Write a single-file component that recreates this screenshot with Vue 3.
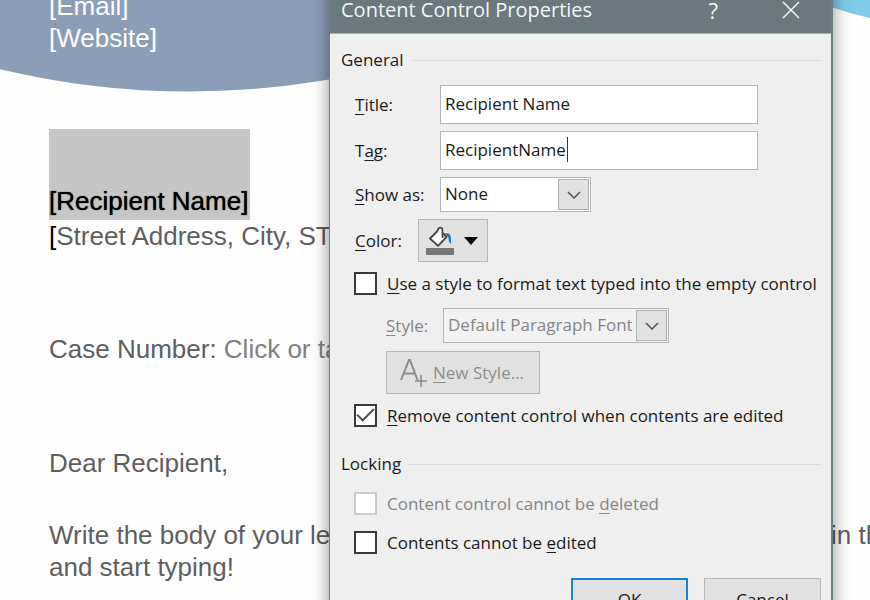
<script setup>
import { ref } from 'vue'

const title = ref('Recipient Name')
const tag = ref('RecipientName')
const showAs = ref('None')
const paragraphStyle = ref('Default Paragraph Font')
const useStyle = ref(false)
const removeOnEdit = ref(true)
const lockDelete = ref(false)
const lockEdit = ref(false)
</script>

<template>
  <main class="workspace">
    <article class="letter">
      <svg class="banner" viewBox="0 0 870 100" preserveAspectRatio="none" aria-hidden="true">
        <path d="M0 0H500V30.600A820 820 0 0 1 0 69.200Z" fill="#8b9eb7" />
        <path d="M780 0H870V18Q850 13.500 832 7.500L780 -12Z" fill="#7fcbea" />
      </svg>
      <address class="contact">
        <span>[Email]</span>
        <span>[Website]</span>
      </address>
      <p class="recipient"><mark>[Recipient Name]</mark></p>
      <p class="street"><b>[</b>Street Address, City, ST</p>
      <p class="case">Case Number: <span>Click or ta</span></p>
      <p class="greeting">Dear Recipient,</p>
      <div class="body-text">
        <p class="split"><span>Write the body of your le</span><span>in th</span></p>
        <p>and start typing!</p>
      </div>
    </article>

    <section class="dialog" role="dialog" aria-labelledby="dialog-title">
      <header class="titlebar">
        <h1 id="dialog-title">Content Control Properties</h1>
        <button type="button" class="caption help">?</button>
        <button type="button" class="caption">
          <svg width="18" height="18" viewBox="0 0 18 18" aria-hidden="true">
            <path d="M1 1L17 17M17 1L1 17" stroke="#f4f6f6" stroke-width="1.500" fill="none" />
          </svg>
        </button>
      </header>

      <form class="content" @submit.prevent>
        <h2>General</h2>
        <div class="fields">
          <div class="row">
            <label for="title"><u>T</u>itle:</label>
            <input id="title" v-model="title" class="textbox" type="text" />
          </div>
          <div class="row">
            <label for="tag">T<u>a</u>g:</label>
            <div class="tagbox">
              <input id="tag" v-model="tag" class="textbox" type="text" />
              <i class="caret"></i>
            </div>
          </div>
          <div class="row">
            <label for="show-as"><u>S</u>how as:</label>
            <div class="combo show-as">
              <select id="show-as" v-model="showAs"><option>None</option></select>
              <span class="drop"><svg width="14" height="8" viewBox="0 0 14 8"><path d="M1 1L7 7L13 1" /></svg></span>
            </div>
          </div>
          <div class="row color-row">
            <label for="color"><u>C</u>olor:</label>
            <button id="color" type="button" class="color">
              <svg width="30" height="30" viewBox="0 0 30 30" aria-hidden="true">
                <rect x="1" y="22" width="28" height="7" fill="#777" />
                <path d="M5 12.500L12 5.500L13.500 2.500Q15 0.800 17 2.200L17.600 7L21.500 11L13 19.800Z" fill="#fff" stroke="#444" stroke-width="1.800" stroke-linejoin="round" />
                <path d="M17.500 7V12" fill="none" stroke="#444" stroke-width="1.800" />
                <path d="M19.500 7.500Q26 6 26 13V18Q23.500 16.500 23.500 11.500Z" fill="#1f74b5" />
              </svg>
              <svg width="14" height="8" viewBox="0 0 14 8" aria-hidden="true"><path d="M0 0H14L7 8Z" fill="#000" /></svg>
            </button>
          </div>
        </div>

        <label class="check">
          <input v-model="useStyle" type="checkbox" />
          <span><u>U</u>se a style to format text typed into the empty control</span>
        </label>
        <div class="style-options">
          <div class="style-row">
            <label for="style"><u>S</u>tyle:</label>
            <div class="combo">
              <select id="style" v-model="paragraphStyle" disabled><option>Default Paragraph Font</option></select>
              <span class="drop"><svg width="14" height="8" viewBox="0 0 14 8"><path d="M1 1L7 7L13 1" /></svg></span>
            </div>
          </div>
          <button type="button" class="new-style" disabled>
            <svg width="30" height="30" viewBox="0 0 30 30" aria-hidden="true">
              <path d="M2 22L10 2H11L18.500 22M5 15.500H16" fill="none" stroke="#8c8c8c" stroke-width="2" />
              <path d="M16 23H28M22 17V29" fill="none" stroke="#8c8c8c" stroke-width="1.600" />
            </svg>
            <span><u>N</u>ew Style...</span>
          </button>
        </div>
        <label class="check">
          <input v-model="removeOnEdit" type="checkbox" />
          <span><u>R</u>emove content control when contents are edited</span>
        </label>

        <h2 class="locking">Locking</h2>
        <label class="check lock disabled">
          <input v-model="lockDelete" type="checkbox" disabled />
          <span>Content control cannot be <u>d</u>eleted</span>
        </label>
        <label class="check lock">
          <input v-model="lockEdit" type="checkbox" />
          <span>Contents cannot be <u>e</u>dited</span>
        </label>

        <footer class="actions">
          <button type="submit" class="primary">OK</button>
          <button type="button">Cancel</button>
        </footer>
      </form>
    </section>
  </main>
</template>

<style>
body {
  margin: 0;
  background: #fefefe;
}
</style>

<style scoped>
* {
  box-sizing: border-box;
}
.workspace {
  position: relative;
  height: 100vh;
  overflow: hidden;
}
.letter {
  display: flow-root;
  position: relative;
  padding-left: 49px;
  color: #5e5e5e;
  font: 26px/32px "Liberation Sans", Arial, sans-serif;
  white-space: nowrap;
}
.letter p {
  margin: 0;
}
.banner {
  position: absolute;
  top: 0;
  left: 0;
  width: 100%;
  height: 100px;
}
.contact {
  position: relative;
  display: flex;
  flex-direction: column;
  margin-top: -10px;
  height: 139px;
  color: #fff;
  font-style: normal;
}
.recipient mark {
  padding: 56px 2px 3px 0;
  background: #c6c6c6;
  color: #000;
  text-shadow: 0 0 1px #000;
}
.recipient {
  display: flex;
}
.street b {
  color: #000;
  font-weight: 400;
}
.letter .case {
  margin-top: 81px;
}
.case span {
  color: #808080;
}
.letter .greeting {
  margin-top: 82px;
}
.body-text {
  margin-top: 40px;
}
.split {
  display: grid;
  grid-template-columns: 782px 1fr;
}
.dialog {
  position: absolute;
  top: -14px;
  left: 329px;
  width: 504px;
  border: solid #6b7f83;
  border-width: 0 2px 0 1px;
  background: #efefef;
  box-shadow: 0 0 16px rgba(0, 0, 0, 0.45);
  color: #1a1a1a;
  font: 17px/24px "Open Sans", "Noto Sans", sans-serif;
}
.titlebar {
  display: flex;
  align-items: center;
  height: 48px;
  padding: 0 31px 0 11px;
  border-bottom: 1px solid #a5adaf;
  background: #69797e;
  color: #f4f6f6;
}
.titlebar h1 {
  flex: 1;
  margin: 0;
  font-size: 20px;
  font-weight: 400;
}
.caption {
  display: flex;
  padding: 0;
  border: 0;
  background: none;
  color: inherit;
  font: inherit;
}
.help {
  margin-right: 64px;
  font-size: 22px;
}
.content {
  padding: 14px 10px 16px 11px;
}
h2 {
  display: flex;
  align-items: center;
  gap: 8px;
  margin: 0;
  font-size: 17px;
  font-weight: 400;
}
h2::after {
  content: "";
  flex: 1;
  height: 1px;
  background: #dcdcdc;
}
u {
  text-decoration-thickness: 1px;
  text-underline-offset: 3px;
}
.fields {
  display: flex;
  flex-direction: column;
  gap: 7px;
  margin: 13px 63px 9px 14px;
}
.row {
  display: grid;
  grid-template-columns: 85px 1fr;
  align-items: center;
}
.color-row {
  grid-template-columns: 63px 70px;
}
.textbox {
  display: block;
  width: 100%;
  height: 39px;
  padding: 0 4px 2px;
  border: 1px solid #b4b4b8;
  border-radius: 0;
  background: #fff;
  color: inherit;
  font: inherit;
  outline: 0;
}
.tagbox {
  position: relative;
}
.caret {
  position: absolute;
  top: 6px;
  left: 127px;
  width: 1px;
  height: 25px;
  background: #333;
}
.combo {
  position: relative;
  width: 226px;
  height: 35px;
}
.show-as {
  width: 151px;
}
.combo select {
  width: 100%;
  height: 100%;
  padding: 0 4px 2px;
  border: 1px solid #b4b4bc;
  border-radius: 0;
  appearance: none;
  background: #fff;
  color: inherit;
  font: inherit;
  opacity: 1;
}
.combo select:disabled {
  background: #f2f2f2;
  color: #858585;
}
.drop {
  position: absolute;
  top: 2px;
  right: 2px;
  bottom: 2px;
  display: grid;
  place-items: center;
  width: 31px;
  border: 1px solid #b0b0b0;
  background: #e1e1e1;
  pointer-events: none;
}
.drop path {
  fill: none;
  stroke: #505050;
  stroke-width: 1.5;
}
button {
  font: inherit;
  color: inherit;
}
.color,
.new-style,
.actions button {
  border: 1px solid #b5b5b5;
  border-radius: 0;
  background: #e1e1e1;
}
.color {
  display: flex;
  align-items: center;
  gap: 9px;
  height: 43px;
  padding: 0 6px;
}
.check {
  display: flex;
  align-items: center;
  gap: 10px;
  height: 24px;
  padding-left: 13px;
  white-space: nowrap;
}
.check span {
  padding-top: 2px;
}
.check input {
  display: grid;
  place-items: center;
  flex: none;
  width: 23px;
  height: 23px;
  margin: 0;
  border: 2px solid #3a3a3a;
  appearance: none;
  background: #fff;
}
.check input:checked::after {
  content: "";
  width: 15px;
  height: 7px;
  margin-top: -5px;
  border: solid #505050;
  border-width: 0 0 2px 2px;
  transform: rotate(-45deg);
}
.check input:disabled {
  border-color: #cccccc;
}
.disabled {
  color: #858585;
}
.style-options {
  margin: 13px 0 9px 45px;
  color: #858585;
}
.style-row {
  display: grid;
  grid-template-columns: 57px 1fr;
  align-items: center;
  margin-bottom: 8px;
}
.new-style {
  display: flex;
  align-items: center;
  gap: 4px;
  height: 43px;
  padding: 0 15px 0 12px;
  color: #8c8c8c;
}
.locking {
  margin-top: 25px;
}
.lock {
  margin-top: 15px;
}
.actions {
  display: flex;
  justify-content: flex-end;
  gap: 16px;
  margin-top: 24px;
}
.actions button {
  width: 117px;
  height: 44px;
}
.actions .primary {
  border: 2px solid #1a80d8;
}
</style>
